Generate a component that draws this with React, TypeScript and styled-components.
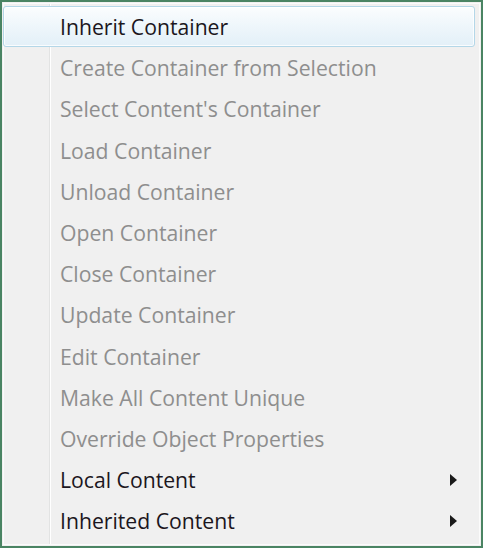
import React from "react";
import styled, { createGlobalStyle } from "styled-components";

const Global = createGlobalStyle`
  html, body { margin: 0; padding: 0; background: #ffffff; }
  body { font-family: "Open Sans", "Noto Sans", sans-serif; }
`;

const Frame = styled.div`
  width: 483px;
  height: 548px;
  box-sizing: border-box;
  border: 2px solid #4a8463;
  background: #f0f0f0;
  padding: 1px;
`;

const Menu = styled.div`
  box-sizing: border-box;
  height: 100%;
  border: 1px solid #fbfbfb;
  display: flex;
  flex-direction: column;
  padding: 2px 0 0 0;
  background:
    linear-gradient(to right, transparent 45px, #e2e3e3 45px, #e2e3e3 46px, #ffffff 46px, #ffffff 47px, transparent 47px);
`;

const Item = styled.div<{ $disabled?: boolean; $active?: boolean }>`
  position: relative;
  height: 41.2px;
  flex: 0 0 auto;
  display: flex;
  align-items: center;
  padding-left: 56px;
  margin: 0 4px 0 -1px;
  box-sizing: border-box;
  font-size: 21.2px;
  letter-spacing: 0;
  color: ${(p) => (p.$disabled ? "#8e8e8e" : "#1b1620")};
  border-radius: 3px;
  border: 1px solid ${(p) => (p.$active ? "#b4d7e8" : "transparent")};
  background: ${(p) =>
    p.$active
      ? "linear-gradient(to bottom, #fbfdfe 0%, #eef6fb 50%, #e3f0f8 100%)"
      : "transparent"};
  box-shadow: ${(p) => (p.$active ? "inset 0 0 0 1px rgba(255,255,255,0.8)" : "none")};
`;

const Arrow = styled.span`
  position: absolute;
  right: 17px;
  top: 50%;
  margin-top: -6px;
  width: 0;
  height: 0;
  border-top: 6px solid transparent;
  border-bottom: 6px solid transparent;
  border-left: 7px solid #1a1a1a;
`;

const items: { label: string; disabled?: boolean; active?: boolean; sub?: boolean }[] = [
  { label: "Inherit Container", active: true },
  { label: "Create Container from Selection", disabled: true },
  { label: "Select Content's Container", disabled: true },
  { label: "Load Container", disabled: true },
  { label: "Unload Container", disabled: true },
  { label: "Open Container", disabled: true },
  { label: "Close Container", disabled: true },
  { label: "Update Container", disabled: true },
  { label: "Edit Container", disabled: true },
  { label: "Make All Content Unique", disabled: true },
  { label: "Override Object Properties", disabled: true },
  { label: "Local Content", sub: true },
  { label: "Inherited Content", sub: true },
];

export default function App() {
  return (
    <>
      <Global />
      <Frame>
        <Menu>
          {items.map((it) => (
            <Item key={it.label} $disabled={it.disabled} $active={it.active}>
              {it.label}
              {it.sub && <Arrow />}
            </Item>
          ))}
        </Menu>
      </Frame>
    </>
  );
}
